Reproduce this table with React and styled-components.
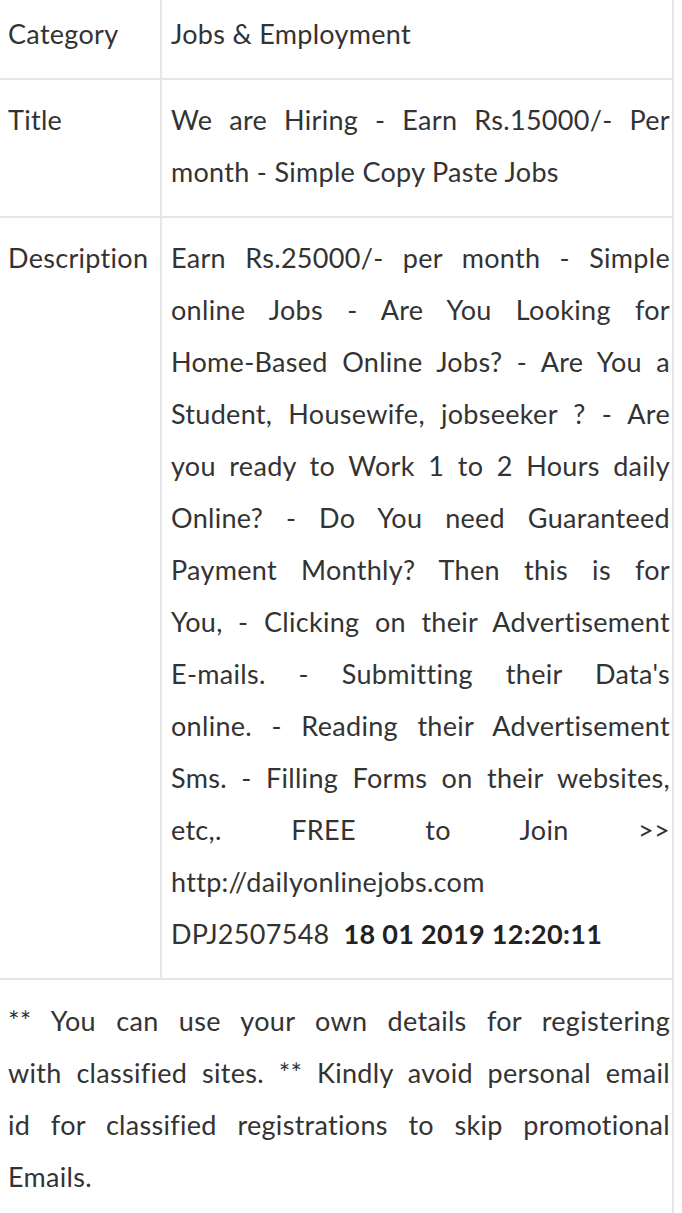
import React from "react";
import styled, { createGlobalStyle } from "styled-components";

const GlobalStyle = createGlobalStyle`
  html, body {
    margin: 0;
    padding: 0;
    background: #ffffff;
  }
  body {
    font-family: Lato, "Open Sans", "Liberation Sans", sans-serif;
    color: #333333;
    letter-spacing: 0.3px;
  }
`;

const Page = styled.div`
  width: 672px;
  margin-top: -6px;
  border-right: 2px solid #e6e6e6;
`;

const Table = styled.table`
  width: 100%;
  border-collapse: collapse;
  table-layout: fixed;
`;

const Row = styled.tr`
  border-bottom: 2px solid #e6e6e6;
`;

const Label = styled.td`
  width: 152px;
  padding: 14px 0 18px 8px;
  vertical-align: top;
  border-right: 2px solid #e6e6e6;
  font-size: 27px;
  line-height: 52px;
  white-space: nowrap;
`;

const Value = styled.td`
  padding: 14px 2px 18px 9px;
  vertical-align: top;
  font-size: 27px;
  line-height: 52px;
`;

const Line = styled.span`
  display: block;
  white-space: nowrap;
  text-align: justify;
  text-align-last: ${({ $last }) => ($last ? "left" : "justify")};
`;

const Ref = styled.span`
  display: block;
`;

const Stamp = styled.b`
  margin-left: 14px;
  font-weight: 700;
  color: #222222;
`;

const Note = styled.div`
  padding: 15px 2px 17px 8px;
  font-size: 27px;
  line-height: 52px;
`;

const Block = ({ lines }) => (
  <>
    {lines.map((l, i) => (
      <Line key={i} $last={i === lines.length - 1}>
        {l}
      </Line>
    ))}
  </>
);

const titleLines = [
  "We are Hiring - Earn Rs.15000/- Per",
  "month - Simple Copy Paste Jobs",
];

const descLines = [
  "Earn Rs.25000/- per month - Simple",
  "online Jobs - Are You Looking for",
  "Home-Based Online Jobs? - Are You a",
  "Student, Housewife, jobseeker ? - Are",
  "you ready to Work 1 to 2 Hours daily",
  "Online? - Do You need Guaranteed",
  "Payment Monthly? Then this is for",
  "You, - Clicking on their Advertisement",
  "E-mails. - Submitting their Data's",
  "online. - Reading their Advertisement",
  "Sms. - Filling Forms on their websites,",
  "etc,. FREE to Join >>",
  "http://dailyonlinejobs.com",
];

const noteLines = [
  "** You can use your own details for registering",
  "with classified sites. ** Kindly avoid personal email",
  "id for classified registrations to skip promotional",
  "Emails.",
];

const App = () => (
  <>
    <GlobalStyle />
    <Page>
      <Table>
        <tbody>
          <Row>
            <Label>Category</Label>
            <Value>Jobs &amp; Employment</Value>
          </Row>
          <Row>
            <Label>Title</Label>
            <Value>
              <Block lines={titleLines} />
            </Value>
          </Row>
          <Row>
            <Label>Description</Label>
            <Value>
              <Block lines={descLines} />
              <Ref>
                DPJ2507548<Stamp>18 01 2019 12:20:11</Stamp>
              </Ref>
            </Value>
          </Row>
        </tbody>
      </Table>
      <Note>
        <Block lines={noteLines} />
      </Note>
    </Page>
  </>
);

export default App;
